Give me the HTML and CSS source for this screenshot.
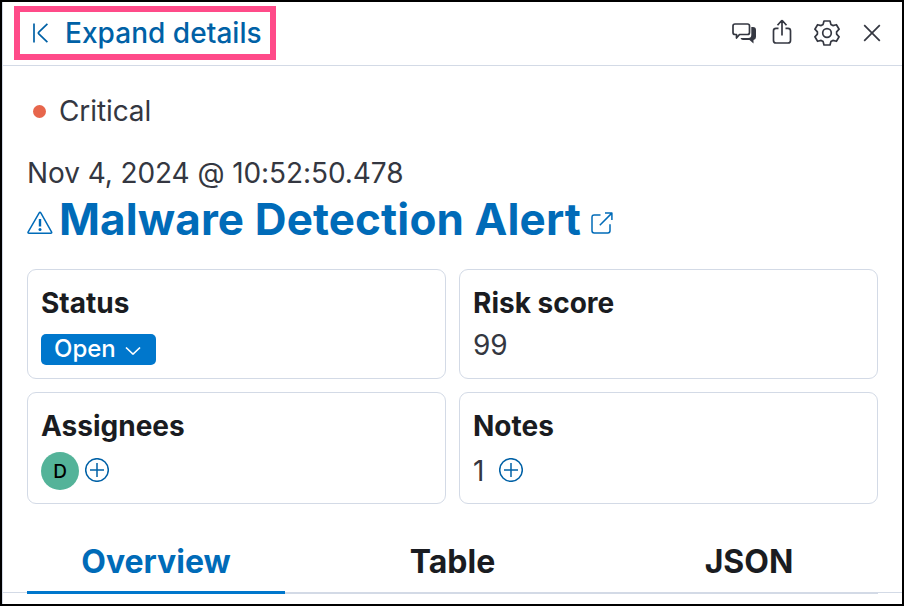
FILE: index.html
```html
<!DOCTYPE html>
<html lang="en">
<head>
<meta charset="utf-8">
<title>Malware Detection Alert</title>
<link rel="stylesheet" href="styles.css">
</head>
<body>
<main class="flyout">
  <header class="toolbar">
    <a class="expand">
      <svg class="expand-icon" width="18" height="22" viewBox="0 0 18 22"><path d="M3 1.600v18.800M16.400 1.800 7.800 10.200q-.9.800 0 1.600l8.600 8.400"/></svg>
      <span>Expand details</span>
    </a>
    <nav class="actions">
      <svg class="chat" width="26" height="24" viewBox="0 0 26 24"><path d="M4 2h12.500q2 0 2 2v6.500q0 2-2 2H8.500L5.500 16v-3.500H4q-2 0-2-2V4q0-2 2-2z"/><path class="solid" d="M20.300 5H22q3 0 3 3v7q0 2.500-2.500 3v3.500L18.500 18H12q-2 0-2.500-2h8q2.800 0 2.800-3z"/></svg>
      <svg class="share" width="20" height="26" viewBox="0 0 20 26"><path d="M6.500 9.300H4q-2.500 0-2.500 2.500v9.700q0 2.500 2.500 2.500h12q2.500 0 2.500-2.500v-9.700q0-2.500-2.500-2.500h-2.500M10 16.500V1.700M5.500 6.200 9.300 2q.7-.7 1.400 0l3.800 4.200"/></svg>
      <svg class="gear" width="26" height="26" viewBox="0 0 26 26"><path d="M10 1h6l.9 3.400 2 1.200 3.500-.9 2.700 4.500-2.500 2.700v2.200l2.500 2.700-2.700 4.500-3.500-.9-2 1.200L16 25h-6l-.9-3.400-2-1.200-3.500.9-2.700-4.500 2.500-2.700v-2.200L.900 9.200l2.700-4.500 3.500.9 2-1.200z"/><circle cx="13" cy="13" r="4.300"/></svg>
      <svg class="close" width="18" height="18" viewBox="0 0 18 18"><path d="m1.200 1.200 15.600 15.600M16.800 1.200 1.200 16.800"/></svg>
    </nav>
  </header>
  <section class="summary">
    <div class="severity"><i class="dot"></i><span>Critical</span></div>
    <div class="date">Nov 4, 2024 @ 10:52:50.478</div>
    <h1 class="title">
      <svg class="warning" width="26" height="24" viewBox="0 0 26 24"><path d="M12.200 1.800q.8-1.300 1.600 0l10.700 19.100q.7 1.300-.8 1.300H2q-1.500 0-.8-1.300z"/><path class="mark" d="M13 8v7.500"/><circle cx="13" cy="18.500" r="1.500"/></svg>
      <span>Malware Detection Alert</span>
      <svg class="external" width="22" height="22" viewBox="0 0 22 22"><path d="M9.500 3H3.200Q1 3 1 5.200v13.600Q1 21 3.200 21h13.600q2.200 0 2.200-2.200v-6.600M8.800 13.200 20.600 1.400M14 1.100h6.900V8"/></svg>
    </h1>
    <div class="cards">
      <article class="card"><h2>Status</h2><button class="badge">Open<svg width="16" height="10" viewBox="0 0 16 10"><path d="m1 1.500 6.300 6q.7.600 1.400 0L15 1.500"/></svg></button></article>
      <article class="card"><h2>Risk score</h2><div class="value">99</div></article>
      <article class="card"><h2>Assignees</h2><div class="people"><span class="avatar">D</span><svg class="plus" width="24" height="24" viewBox="0 0 24 24"><circle cx="12" cy="12" r="11.300"/><path d="M12 5v14M5 12h14"/></svg></div></article>
      <article class="card"><h2>Notes</h2><div class="people notes"><span>1</span><svg class="plus" width="24" height="24" viewBox="0 0 24 24"><circle cx="12" cy="12" r="11.300"/><path d="M12 5v14M5 12h14"/></svg></div></article>
    </div>
  </section>
  <nav class="tabs">
    <div class="tab-list"><a class="tab active"><span>Overview</span></a><a class="tab"><span>Table</span></a><a class="tab"><span>JSON</span></a></div>
  </nav>
</main>
</body>
</html>
```

FILE: styles.css
```css
* { box-sizing: border-box; }
body { margin: 0; font-family: Inter, sans-serif; font-optical-sizing: none; color: #343741; background: #fff; }
h1, h2 { margin: 0; }
svg { display: block; flex: none; fill: none; stroke: #343741; stroke-width: 1.7; stroke-linejoin: round; }
.flyout { width: 904px; height: 606px; border: 2px solid #000; overflow: hidden; box-shadow: inset 1px 0 #d3dae6; }
.toolbar { height: 64px; border-bottom: 1px solid #d3dae6; display: flex; justify-content: space-between; align-items: flex-start; padding: 4px 21px 0 11px; margin-left: 1px; }
.expand { width: 262px; height: 54px; border: 6px solid #ff4b89; display: flex; align-items: center; padding-left: 11px; gap: 16px; color: #0061a6; font-size: 28px; font-weight: 500; letter-spacing: .04px; line-height: 42px; white-space: nowrap; }
.expand-icon { stroke: #0061a6; }
.actions { display: flex; align-items: center; height: 54px; }
.chat { margin-top: 2px; }
.share { margin: -2px 0 0 15px; }
.gear { margin-left: 22px; }
.close { margin-left: 23px; }
.chat .solid { fill: #343741; stroke: none; }
.summary { padding: 24px 24px 0 25px; }
.severity { display: flex; align-items: center; height: 42px; font-size: 28px; line-height: 42px; letter-spacing: -.1px; }
.dot { width: 13px; height: 13px; border-radius: 50%; background: #e7664c; margin: 1px 13px 0 6px; }
.date { margin-top: 20px; font-size: 28px; line-height: 42px; letter-spacing: -.08px; }
.title { display: flex; align-items: center; height: 50px; color: #006bb8; font-size: 44px; font-weight: 700; letter-spacing: .12px; line-height: 50px; white-space: nowrap; }
.warning, .external { stroke: #006bb8; stroke-width: 1.5; }
.warning { margin: 7px 6px 0 0; }
.warning .mark { stroke-width: 2.4; }
.warning circle { fill: #006bb8; stroke: none; }
.external { margin: 7px 0 0 10px; }
.cards { display: grid; grid-template-columns: 419px 419px; grid-template-rows: 110px 112px; gap: 13px; margin-top: 25px; }
.card { border: 1px solid #d3dae6; border-radius: 9px; padding: 12px 13px 13px; }
.card h2 { color: #1a1c21; font-size: 28px; line-height: 42px; font-weight: 700; }
.value { font-size: 28px; line-height: 42px; }
.badge { display: flex; align-items: center; width: 115px; height: 31px; margin-top: 10px; border: 0; border-radius: 5px; background: #0077cc; color: #fff; font: 500 24px/29px Inter, sans-serif; padding: 0 0 2px 13px; gap: 9px; }
.badge svg { stroke: #fff; margin-top: 4px; }
.people { display: flex; align-items: center; height: 38px; margin-top: 5px; gap: 6px; font-size: 28px; }
.avatar { width: 38px; height: 38px; border-radius: 50%; background: #54b399; color: #000; display: grid; place-items: center; font-size: 19px; font-weight: 500; }
.plus { stroke: #0061a6; stroke-width: 1.5; margin-bottom: 2px; }
.notes { gap: 15px; }
.tabs { margin: 24px 0 0 1px; height: 66px; background: linear-gradient(#d3dae6, #d3dae6) 0 64px / 100% 1px no-repeat; padding: 0 24px; }
.tab-list { display: flex; gap: 38.5px; height: 66px; border-bottom: 2px solid #d3dae6; }
.tab { flex: 1; height: 66px; text-align: center; color: #1a1c21; font-size: 32px; line-height: 67px; font-weight: 700; }
.active { color: #006bb8; border-bottom: 3px solid #0077cc; }
```
